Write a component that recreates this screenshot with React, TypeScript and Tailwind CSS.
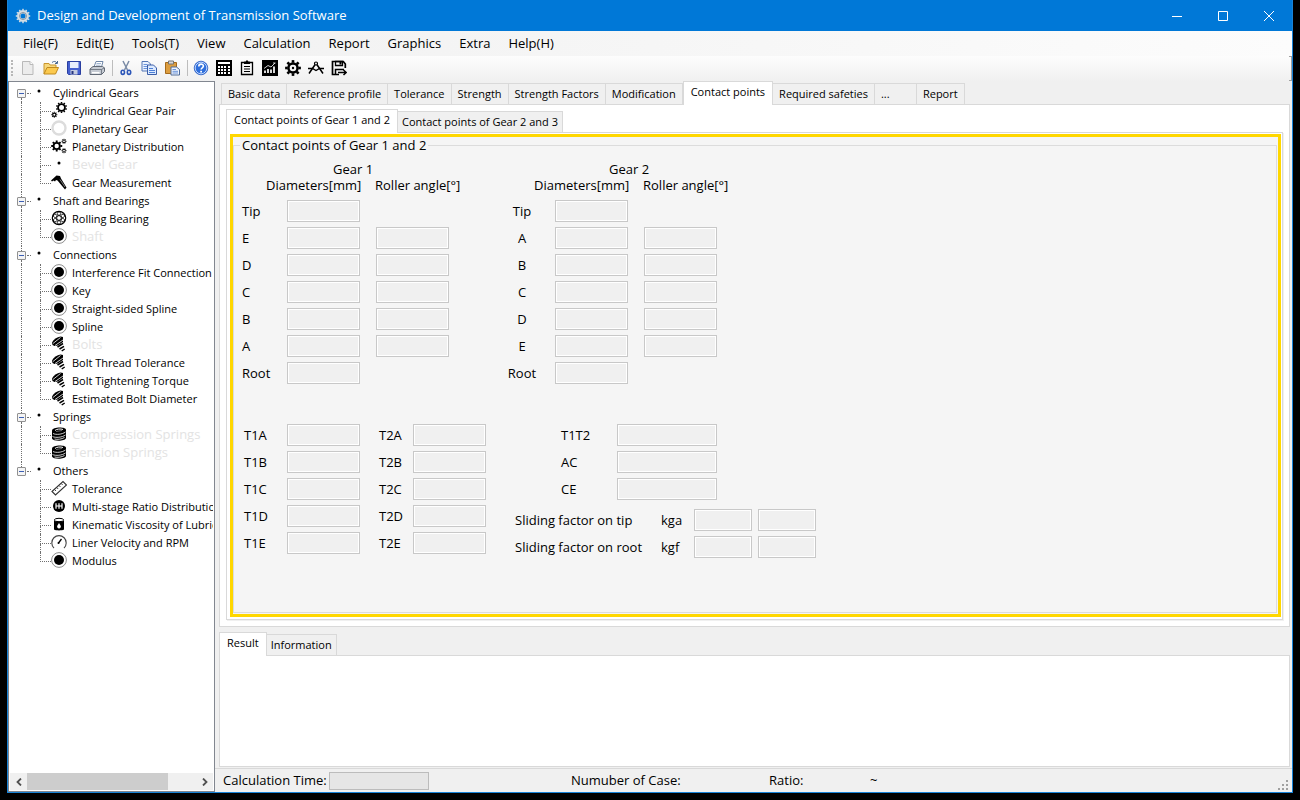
import type { ReactNode } from "react";
import clsx from "clsx";

const MENUS = [
  "File(F)",
  "Edit(E)",
  "Tools(T)",
  "View",
  "Calculation",
  "Report",
  "Graphics",
  "Extra",
  "Help(H)",
];

/* ---------- Icons ---------- */

function Icon({ children, size = 16 }: { children: ReactNode; size?: number }) {
  return (
    <svg width={size} height={size} viewBox="0 0 16 16" fill="none" aria-hidden="true" className="shrink-0">
      {children}
    </svg>
  );
}

type GearProps = { cx: number; cy: number; r: number; hole: number; teeth?: number; tooth?: number; color?: string };

function Gear({ cx, cy, r, hole, teeth = 8, tooth = 2, color = "#000" }: GearProps) {
  const mid = (r + hole) / 2;
  return (
    <g transform={`translate(${cx} ${cy})`}>
      <circle r={mid} stroke={color} strokeWidth={r - hole} />
      {Array.from({ length: teeth }, (_, i) => (
        <rect
          key={i}
          x={-tooth / 2}
          y={-r - tooth * 0.8}
          width={tooth}
          height={tooth}
          fill={color}
          transform={`rotate(${(360 / teeth) * i})`}
        />
      ))}
    </g>
  );
}

const NewIcon = () => (
  <Icon>
    <path d="M2.500 1.500h7.500l3 3v10H2.500z" fill="#ececec" stroke="#b9b9b9" />
    <path d="M10 1.500v3h3" fill="#fff" stroke="#b9b9b9" />
  </Icon>
);

const OpenIcon = () => (
  <Icon>
    <path d="M1 14V3.500h5l1 1.500h6v3" fill="#f6d77b" stroke="#c9952c" />
    <path d="M1 14l3-6.500h11.500L12.500 14z" fill="#fbc94e" stroke="#c08a1e" />
    <path d="M9 2.500c2-1.700 3.700-1.200 5 .5M14.500 1v2.500H12" stroke="#4c6b93" />
  </Icon>
);

const SaveIcon = () => (
  <Icon>
    <path d="M1.500 1.500h13v13h-12l-1-1z" fill="#4560cf" stroke="#2a3fa0" />
    <rect x="4" y="2" width="8.500" height="6" fill="#e8eefc" />
    <rect x="4.500" y="10" width="7" height="4.500" fill="#c4cbe0" />
    <rect x="5.500" y="11" width="2" height="3" fill="#26357e" />
  </Icon>
);

const PrintIcon = () => (
  <Icon>
    <path d="M5 7l2-5.500h7L12.500 7z" fill="#fff" stroke="#6f87a8" />
    <path d="M7.500 3.500h4.500M7 5.200h4.500" stroke="#8aa4c6" strokeWidth=".8" />
    <path d="M1 9l3-2.500h9.500L15.500 8v3.500L12.500 14.500H1z" fill="#c6cbd3" stroke="#626a76" />
    <path d="M1 9.500h11.500l3-1.800M12.500 9.500v5" stroke="#626a76" strokeWidth=".8" />
    <path d="M3 12h7.500v1.500H3z" fill="#fff" />
  </Icon>
);

const CutIcon = () => (
  <Icon>
    <path d="M5 1l4.500 9M11 1L6.500 10" stroke="#7a8ba6" strokeWidth="1.500" />
    <ellipse cx="4.800" cy="12.300" rx="1.700" ry="2.100" stroke="#2c56b8" strokeWidth="1.600" />
    <ellipse cx="11" cy="12.300" rx="1.700" ry="2.100" stroke="#2c56b8" strokeWidth="1.600" />
  </Icon>
);

const CopyIcon = () => (
  <Icon>
    <path d="M1 1.500h6l2.500 2.500v7H1z" fill="#eaf2ff" stroke="#5577b5" />
    <path d="M2.500 4.500h4M2.500 6.500h4M2.500 8.500h4" stroke="#6b94dc" />
    <path d="M6.500 5h6l3 3v6.500h-9z" fill="#dceaff" stroke="#3c5fa8" />
    <path d="M8 8.500h4M8 10.500h6M8 12.500h6" stroke="#4d7fd6" />
  </Icon>
);

const PasteIcon = () => (
  <Icon>
    <path d="M1.500 2.500h11v11h-11z" fill="#dc9d3f" stroke="#a56a1c" />
    <path d="M4.500 1h5v3h-5z" fill="#d9d9d9" stroke="#757575" />
    <path d="M7 7h5.500L15.500 9.500V15H7z" fill="#eef3fb" stroke="#516c99" />
    <path d="M8.500 9.500h3.500M8.500 11.300h5.500M8.500 13h5.500" stroke="#6b94dc" />
  </Icon>
);

const HelpIcon = () => (
  <Icon>
    <circle cx="8" cy="8" r="6.800" fill="#2f6fdc" stroke="#2a5cc0" strokeWidth=".8" />
    <circle cx="8" cy="8" r="5.800" stroke="#cfe0ff" strokeWidth=".9" />
    <path d="M5.800 6.400c0-3 4.600-2.900 4.600-.3 0 1.700-2.300 1.700-2.300 3.400" stroke="#fff" strokeWidth="1.600" />
    <rect x="7.200" y="10.800" width="1.800" height="1.700" fill="#fff" />
  </Icon>
);

const CalculatorIcon = () => (
  <Icon>
    <rect width="16" height="16" fill="#000" />
    <rect x="2" y="2" width="12" height="2" fill="#fff" />
    {[6, 9, 12].map((y) =>
      [2, 5, 8, 12].map((x) => <rect key={`${x}-${y}`} x={x} y={y} width="2" height="2" fill="#fff" />)
    )}
  </Icon>
);

const ClipboardIcon = () => (
  <Icon>
    <path d="M5 2.500H2.500v12h11v-12H11" stroke="#000" strokeWidth="1.300" />
    <path d="M5 1.500h1.500L8 0l1.500 1.500H11V4H5z" fill="#000" />
    <path d="M5 6.500h6M5 9h6M5 11.500h6" stroke="#000" />
  </Icon>
);

const ChartIcon = () => (
  <Icon>
    <rect width="16" height="16" fill="#000" />
    <path d="M3 13V10.500M6 13V9M9 13V9.500M12 13V6.500" stroke="#fff" strokeWidth="1.700" />
    <path d="M2 8.500l4-3 3 1.500 4-4M11 3h2.500" stroke="#fff" strokeWidth=".8" />
  </Icon>
);

const SettingsIcon = () => (
  <Icon>
    <Gear cx={8} cy={8} r={5.800} hole={3.300} tooth={2.600} />
    <circle cx="8" cy="8" r="1.200" fill="#000" />
  </Icon>
);

const CompassIcon = () => (
  <Icon>
    <path d="M7.500 4L1 13.500M8.500 4l6.500 9.500" stroke="#000" strokeWidth="1.500" />
    <circle cx="8" cy="3.500" r="1.500" fill="#fff" stroke="#000" strokeWidth="1.200" />
    <path d="M0 8.500h4.500L8 10.500l3.500-2H16" stroke="#000" strokeWidth="1.300" />
  </Icon>
);

const SaveAsIcon = () => (
  <Icon>
    <path d="M14.300 8V4l-2-2.500H1.500V14.500H8" stroke="#000" strokeWidth="1.700" />
    <path d="M4.500 1.500h7v4h-7z" stroke="#000" strokeWidth="1.300" />
    <rect x="8.500" y="2" width="2" height="2.500" fill="#000" />
    <path d="M4.500 14V9.500H13" stroke="#000" strokeWidth="1.500" />
    <path d="M7 12.500h8M12.500 10l2.700 2.500-2.700 2.500" stroke="#000" strokeWidth="1.500" />
  </Icon>
);

const DotIcon = () => (
  <Icon>
    <circle cx="8" cy="7" r="1.500" fill="#000" />
  </Icon>
);

const GearPairIcon = () => (
  <Icon>
    <Gear cx={10.500} cy={5.500} r={4.300} hole={2.500} teeth={10} tooth={1.500} />
    <Gear cx={3.300} cy={12.700} r={2.200} hole={1} tooth={1} />
  </Icon>
);

const RingIcon = () => (
  <Icon>
    <circle cx="8" cy="8" r="6.500" stroke="#dcdcdc" strokeWidth="2.400" />
  </Icon>
);

const PlanetaryIcon = () => (
  <Icon>
    <Gear cx={5.700} cy={8} r={4} hole={2.200} tooth={1.900} />
    <Gear cx={13} cy={3.300} r={1.800} hole={0.900} tooth={0.900} />
    <Gear cx={13} cy={12.700} r={1.800} hole={0.900} tooth={0.900} />
  </Icon>
);

const MeasureIcon = () => (
  <Icon>
    <path d="M0 6.500L5.500 1.500 9 2l1 2.500 5.500 9-1.500 2L6.500 6.500 5 6l-1 1.500-1.500-1-1.500 1z" fill="#000" />
    <path d="M9 5.500l5 7.500" stroke="#fff" strokeWidth=".5" />
  </Icon>
);

const BearingIcon = () => (
  <Icon>
    <circle cx="8" cy="8" r="6.700" stroke="#000" strokeWidth="1.200" />
    <circle cx="8" cy="8" r="2.400" stroke="#000" />
    {[0, 60, 120, 180, 240, 300].map((a) => (
      <circle key={a} cx="8" cy="3.600" r="1.700" stroke="#000" strokeWidth=".8" transform={`rotate(${a} 8 8)`} />
    ))}
  </Icon>
);

const RadioIcon = () => (
  <Icon>
    <circle cx="8" cy="8" r="7.400" stroke="#808080" strokeWidth=".9" />
    <circle cx="8" cy="8" r="5" fill="#000" />
  </Icon>
);

const BoltIcon = () => (
  <Icon>
    <path d="M1 6.500C2.500 3.500 6 1 9.500.5L12 1v5L7 9.500 3.500 10 1.500 9z" fill="#000" />
    <path d="M2 7.500L9.500 1.500M4 9.500l8-5.500" stroke="#fff" strokeWidth=".8" />
    <path d="M6.500 11l5.500-3.500M8.500 13l4.500-2.700M10.700 15l3-2" stroke="#000" strokeWidth="1.500" />
  </Icon>
);

const SpringIcon = () => (
  <Icon>
    <path d="M1 4.500C1 1 15 .5 15 4v8c-1 3.500-13 3.500-14 .5z" fill="#000" />
    <path d="M4 4.500c1-1.500 6-2 8-1" stroke="#fff" />
    <path d="M5 5.500l6-1" stroke="#999" strokeWidth=".7" />
    <path d="M2 7.500c3 1.500 9 1 12.500-1.500M1.500 10.500c3 1.500 9.500 1 13-1.500M3.500 13c3 .8 7 .2 10-1.500" stroke="#fff" strokeWidth=".8" />
  </Icon>
);

const RulerIcon = () => (
  <Icon>
    <path d="M1 11.500L12 1.500l3.500 3.500L4.500 15z" stroke="#333" strokeWidth="1.100" />
    <path d="M3.500 9.500L5 11M5.700 7.500l1.500 1.500M8 5.500L9.500 7M10.200 3.500L11.700 5" stroke="#333" strokeWidth=".9" />
  </Icon>
);

const RatioIcon = () => (
  <Icon>
    <circle cx="8" cy="8" r="6" fill="#000" />
    <path d="M5 5.200v5.600M8 5.200v5.600M11 5.200v5.600M5 8h6" stroke="#fff" strokeWidth="1.200" />
  </Icon>
);

const DrumIcon = () => (
  <Icon>
    <path d="M3 5h10v8.500c-2 1.200-8 1.200-10 0z" fill="#000" />
    <ellipse cx="8" cy="4" rx="4.700" ry="1.700" fill="#fff" stroke="#000" />
    <path d="M8 7l1.700 2.700a1.900 1.900 0 1 1-3.400 0z" fill="#fff" />
  </Icon>
);

const GaugeIcon = () => (
  <Icon>
    <path d="M3 14a7.200 7.200 0 1 1 10 0" stroke="#444" strokeWidth="1.100" />
    <path d="M7.500 9l3-4" stroke="#000" strokeWidth="1.300" />
    <circle cx="7.500" cy="9" r="1" fill="#000" />
  </Icon>
);

/* ---------- Data ---------- */

type Leaf = { label: string; icon: () => ReactNode; disabled?: boolean };

const TREE: { label: string; items: Leaf[] }[] = [
  {
    label: "Cylindrical Gears",
    items: [
      { label: "Cylindrical Gear Pair", icon: GearPairIcon },
      { label: "Planetary Gear", icon: RingIcon },
      { label: "Planetary Distribution", icon: PlanetaryIcon },
      { label: "Bevel Gear", icon: DotIcon, disabled: true },
      { label: "Gear Measurement", icon: MeasureIcon },
    ],
  },
  {
    label: "Shaft and Bearings",
    items: [
      { label: "Rolling Bearing", icon: BearingIcon },
      { label: "Shaft", icon: RadioIcon, disabled: true },
    ],
  },
  {
    label: "Connections",
    items: [
      { label: "Interference Fit Connection", icon: RadioIcon },
      { label: "Key", icon: RadioIcon },
      { label: "Straight-sided Spline", icon: RadioIcon },
      { label: "Spline", icon: RadioIcon },
      { label: "Bolts", icon: BoltIcon, disabled: true },
      { label: "Bolt Thread Tolerance", icon: BoltIcon },
      { label: "Bolt Tightening Torque", icon: BoltIcon },
      { label: "Estimated Bolt Diameter", icon: BoltIcon },
    ],
  },
  {
    label: "Springs",
    items: [
      { label: "Compression Springs", icon: SpringIcon, disabled: true },
      { label: "Tension Springs", icon: SpringIcon, disabled: true },
    ],
  },
  {
    label: "Others",
    items: [
      { label: "Tolerance", icon: RulerIcon },
      { label: "Multi-stage Ratio Distribution", icon: RatioIcon },
      { label: "Kinematic Viscosity of Lubricant", icon: DrumIcon },
      { label: "Liner Velocity and RPM", icon: GaugeIcon },
      { label: "Modulus", icon: RadioIcon },
    ],
  },
];

const TOOLS: { label: string; icon: () => ReactNode }[][] = [
  [
    { label: "New", icon: NewIcon },
    { label: "Open", icon: OpenIcon },
    { label: "Save", icon: SaveIcon },
    { label: "Print", icon: PrintIcon },
  ],
  [
    { label: "Cut", icon: CutIcon },
    { label: "Copy", icon: CopyIcon },
    { label: "Paste", icon: PasteIcon },
  ],
  [
    { label: "Help", icon: HelpIcon },
    { label: "Calculate", icon: CalculatorIcon },
    { label: "Report", icon: ClipboardIcon },
    { label: "Graphics", icon: ChartIcon },
    { label: "Settings", icon: SettingsIcon },
    { label: "Drawing", icon: CompassIcon },
    { label: "Save as", icon: SaveAsIcon },
  ],
];

const TABS = [
  "Basic data",
  "Reference profile",
  "Tolerance",
  "Strength",
  "Strength Factors",
  "Modification",
  "Contact points",
  "Required safeties",
  "...",
  "Report",
];

/* ---------- Window chrome ---------- */

function TitleBar() {
  return (
    <header className="flex h-[31px] shrink-0 items-center bg-[#0078d7] text-white">
      <div className="flex flex-1 items-center gap-1.5 pl-[7px]">
        <Icon>
          <Gear cx={8} cy={8} r={6} hole={2.500} teeth={12} tooth={1.500} color="#d5dde3" />
          <circle cx="8" cy="8" r="3.500" stroke="#8796a3" />
        </Icon>
        <h1 className="text-[13px]">Design and Development of Transmission Software</h1>
      </div>
      <button type="button" aria-label="Minimize" className="flex h-full w-[46px] items-center justify-center">
        <svg width="10" height="10" viewBox="0 0 10 10" stroke="#fff"><path d="M0 5.500h10" /></svg>
      </button>
      <button type="button" aria-label="Maximize" className="flex h-full w-[46px] items-center justify-center">
        <svg width="10" height="10" viewBox="0 0 10 10" stroke="#fff" fill="none"><path d="M.5.5h9v9h-9z" /></svg>
      </button>
      <button type="button" aria-label="Close" className="flex h-full w-[46px] items-center justify-center">
        <svg width="10" height="10" viewBox="0 0 10 10" stroke="#fff"><path d="M0 0l10 10M10 0L0 10" /></svg>
      </button>
    </header>
  );
}

function MenuBar() {
  return (
    <nav className="flex h-[25px] shrink-0 items-center bg-linear-to-r from-[#f0f0f0] to-[#fcfcfc] pl-1.5 text-[13px]">
      {MENUS.map((m) => (
        <button key={m} type="button" className="px-[9px]">{m}</button>
      ))}
    </nav>
  );
}

function ToolBar() {
  return (
    <div className="flex h-[25px] shrink-0 bg-linear-to-b from-[#fdfdfd] to-[#f0f0f0] pl-[3px]">
      <div className="mr-[3px] mt-1 h-4 w-0.5 border-l-2 border-dotted border-[#b8b8b8]" />
      {TOOLS.map((group, i) => (
        <div key={i} className="flex h-6 items-center">
          {i > 0 && <div className="ml-1 mr-px h-4 w-px bg-[#bdbdbd]" />}
          {group.map(({ label, icon: I }) => (
            <button key={label} type="button" aria-label={label} className="flex h-6 w-[23px] items-center justify-center">
              <I />
            </button>
          ))}
        </div>
      ))}
      <div className="ml-auto h-full w-[3px] border-y border-r border-[#a0a0a0]" />
    </div>
  );
}

/* ---------- Tree ---------- */

function Sidebar() {
  return (
    <aside className="flex w-[207px] shrink-0 flex-col border border-[#828790] bg-white p-px">
      <ul className="flex-1 overflow-hidden whitespace-nowrap pt-px text-[11px] leading-[17px]">
        {TREE.map((group, gi) => {
          const lastGroup = gi === TREE.length - 1;
          return (
            <li key={group.label}>
              <div className="flex h-[18px]">
                <div className="flex w-[21px] shrink-0 flex-col">
                  <div className="flex h-[5px] pl-[11px]">
                    <div className={clsx("border-l border-dotted", gi > 0 ? "border-[#707070]" : "border-transparent")} />
                  </div>
                  <div className="flex items-center pl-[7px]">
                    <button
                      type="button"
                      aria-label={`Collapse ${group.label}`}
                      className="flex h-[9px] w-[9px] items-center justify-center rounded-[1px] border border-[#919191] bg-[#f4f4f4]"
                    >
                      <span className="h-px w-[5px] bg-[#3c5fb4]" />
                    </button>
                    <span className="ml-px flex-1 border-t border-dotted border-[#707070]" />
                  </div>
                  <div className="flex h-1 pl-[11px]">
                    <div className={clsx("border-l border-dotted", lastGroup ? "border-transparent" : "border-[#707070]")} />
                  </div>
                </div>
                <DotIcon />
                <span className="pl-1.5">{group.label}</span>
              </div>
              <ul>
                {group.items.map(({ label, icon: I, disabled }, i) => (
                  <li key={label} className="flex h-[18px]">
                    <div className="flex w-[21px] shrink-0 pl-[11px]">
                      <div className={clsx("border-l border-dotted", lastGroup ? "border-transparent" : "border-[#707070]")} />
                    </div>
                    <div className="flex w-5 shrink-0 flex-col pl-[9px]">
                      <div className="h-2.5 border-b border-l border-dotted border-[#707070]" />
                      {i < group.items.length - 1 && (
                        <div className="h-2 border-l border-dotted border-[#707070]" />
                      )}
                    </div>
                    <I />
                    <span className={clsx("pl-[5px]", disabled && "text-[13px] text-[#e3e3e3]")}>{label}</span>
                  </li>
                ))}
              </ul>
            </li>
          );
        })}
      </ul>
      <div className="flex h-[17px] items-stretch bg-[#f0f0f0]">
        <button type="button" aria-label="Scroll left" className="flex w-[17px] items-center justify-center">
          <svg width="6" height="8" viewBox="0 0 6 8" fill="none" stroke="#505050" strokeWidth="1.800"><path d="M5 .5L1.500 4 5 7.500" /></svg>
        </button>
        <div className="flex-1">
          <div className="h-full w-5/6 bg-[#cdcdcd]" />
        </div>
        <button type="button" aria-label="Scroll right" className="flex w-[17px] items-center justify-center">
          <svg width="6" height="8" viewBox="0 0 6 8" fill="none" stroke="#505050" strokeWidth="1.800"><path d="M1 .5L4.500 4 1 7.500" /></svg>
        </button>
      </div>
    </aside>
  );
}

/* ---------- Tabs ---------- */

type TabStripProps = { tabs: string[]; active: string; className?: string; tabClass?: string };

function TabStrip({ tabs, active, className, tabClass = "px-1" }: TabStripProps) {
  return (
    <div role="tablist" className={clsx("-mb-px flex items-end whitespace-nowrap text-[11px]", className)}>
      {tabs.map((t) => {
        const on = t === active;
        return (
          <button
            key={t}
            type="button"
            role="tab"
            aria-selected={on}
            className={clsx(
              "border-[#d9d9d9] leading-4",
              on
                ? "relative h-6 border-x border-t bg-white px-[7px] pb-1"
                : ["h-[22px] border-y border-r bg-[#f0f0f0] first:border-l", tabClass],
              t === "..." && "min-w-[42px] text-left"
            )}
          >
            {t}
          </button>
        );
      })}
    </div>
  );
}

/* ---------- Form ---------- */

function Field({ id, label, className = "w-[73px]" }: { id: string; label?: string; className?: string }) {
  return (
    <input
      id={id}
      aria-label={label}
      readOnly
      className={clsx(
        "h-[22px] shrink-0 border border-[#c8c8c8] bg-[#f0f0f0] px-1 shadow-[inset_0_0_0_1px_#fff] outline-none",
        className
      )}
    />
  );
}

type GearPointsProps = { n: number; points: string[]; titleClass: string; labelClass: string };

function GearPoints({ n, points, titleClass, labelClass }: GearPointsProps) {
  return (
    <section className="w-[268px]">
      <h2 className={clsx("leading-4", titleClass)}>{`Gear ${n}`}</h2>
      <div className="mb-[7px] flex pl-6 leading-4">
        <span className="w-[109px]">Diameters[mm]</span>
        <span>Roller angle[°]</span>
      </div>
      <div className="flex flex-col gap-[5px]">
        {points.map((p) => {
          const id = `gear${n}-${p}`;
          return (
            <div key={p} className="flex items-center">
              <div className="w-[45px] shrink-0">
                <label htmlFor={id} className={labelClass}>{p}</label>
              </div>
              <Field id={id} />
              {p.length === 1 && (
                <div className="flex pl-4">
                  <Field id={`${id}-angle`} label={`Gear ${n} roller angle ${p}`} />
                </div>
              )}
            </div>
          );
        })}
      </div>
    </section>
  );
}

function ContactPointsForm() {
  return (
    <fieldset className="min-w-0 flex-1 border border-[#dcdcdc] bg-[#f5f5f5] pl-1.5 text-[13px] leading-[22px]">
      <legend className="px-0.5 leading-4">Contact points of Gear 1 and 2</legend>
      <div className="flex pl-0.5 pt-2">
        <GearPoints n={1} points={["Tip", "E", "D", "C", "B", "A", "Root"]} titleClass="pl-[91px]" labelClass="block" />
        <GearPoints
          n={2}
          points={["Tip", "A", "B", "C", "D", "E", "Root"]}
          titleClass="pl-[99px]"
          labelClass="flex w-6 justify-center"
        />
      </div>

      <div className="flex pl-0.5 pt-10">
        <div className="flex w-[273px] flex-col gap-[5px]">
          {["A", "B", "C", "D", "E"].map((p) => (
            <div key={p} className="flex items-center">
              <label htmlFor={`t1${p}`} className="w-[45px] pl-0.5">{`T1${p}`}</label>
              <Field id={`t1${p}`} />
              <label htmlFor={`t2${p}`} className="w-[53px] pl-[19px]">{`T2${p}`}</label>
              <Field id={`t2${p}`} />
            </div>
          ))}
        </div>
        <div className="flex flex-col gap-[5px]">
          {["T1T2", "AC", "CE"].map((p) => (
            <div key={p} className="flex items-center">
              <label htmlFor={p} className="w-[102px] pl-[46px]">{p}</label>
              <Field id={p} className="w-[100px]" />
            </div>
          ))}
          {[
            ["Sliding factor on tip", "kga"],
            ["Sliding factor on root", "kgf"],
          ].map(([text, k], i) => (
            <div key={k} className={clsx("flex items-center", i === 0 && "pt-1")}>
              <span className="w-[146px]">{text}</span>
              <label htmlFor={k} className="w-[33px]">{k}</label>
              <div className="flex gap-1.5">
                <Field id={k} className="w-[58px]" />
                <Field id={`${k}2`} label={`${text}, gear 2`} className="w-[58px]" />
              </div>
            </div>
          ))}
        </div>
      </div>
    </fieldset>
  );
}

function StatusBar() {
  return (
    <footer className="flex h-6 shrink-0 items-center border-t border-[#d9d9d9] pl-2 text-[13px]">
      <div className="flex w-[348px] items-center gap-0.5">
        <span>Calculation Time:</span>
        <div className="h-[18px] w-[100px] border border-[#bcbcbc] bg-[#e6e6e6]" />
      </div>
      <span className="w-[198px]">Numuber of Case:</span>
      <span className="w-[101px]">Ratio:</span>
      <span>~</span>
      <svg width="12" height="12" viewBox="0 0 12 12" fill="#a0a0a0" className="ml-auto mr-0.5 self-end">
        <path d="M8 0h2v2H8zM4 4h2v2H4zM8 4h2v2H8zM0 8h2v2H0zM4 8h2v2H4zM8 8h2v2H8z" />
      </svg>
    </footer>
  );
}

export default function App() {
  return (
    <div className="flex h-screen bg-black px-[7px] pb-[7px] font-['Open_Sans','Noto_Sans_CJK_SC',sans-serif] text-black">
      <div className="flex min-w-0 flex-1 flex-col border-x border-b border-[#1883d7] bg-[#f0f0f0]">
        <TitleBar />
        <MenuBar />
        <ToolBar />
        <div className="flex min-h-0 flex-1">
          <Sidebar />
          <main className="flex min-w-0 flex-1 flex-col">
            <div className="flex min-h-0 flex-1 flex-col pl-1 pr-0.5">
              <TabStrip tabs={TABS} active="Contact points" className="pl-0.5" tabClass="px-1.5" />
              <div className="flex min-h-0 flex-1 flex-col border border-[#d9d9d9] bg-white px-1.5 pb-1.5 pt-1">
                <TabStrip
                  tabs={["Contact points of Gear 1 and 2", "Contact points of Gear 2 and 3"]}
                  active="Contact points of Gear 1 and 2"
                />
                <div className="flex min-h-0 flex-1 border border-[#d9d9d9] bg-white pb-0.5 pl-[3px] pr-px pt-px shadow-[1px_1px_0_#f0f0f0]">
                  <div className="flex min-w-0 flex-1 border-3 border-[#ffd700] bg-[#f5f5f5] pb-px pr-px">
                    <ContactPointsForm />
                  </div>
                </div>
              </div>
              <TabStrip tabs={["Result", "Information"]} active="Result" className="pt-[5px]" />
              <div className="mb-px h-28 shrink-0 border border-[#d9d9d9] bg-white" />
            </div>
            <StatusBar />
          </main>
        </div>
      </div>
    </div>
  );
}
